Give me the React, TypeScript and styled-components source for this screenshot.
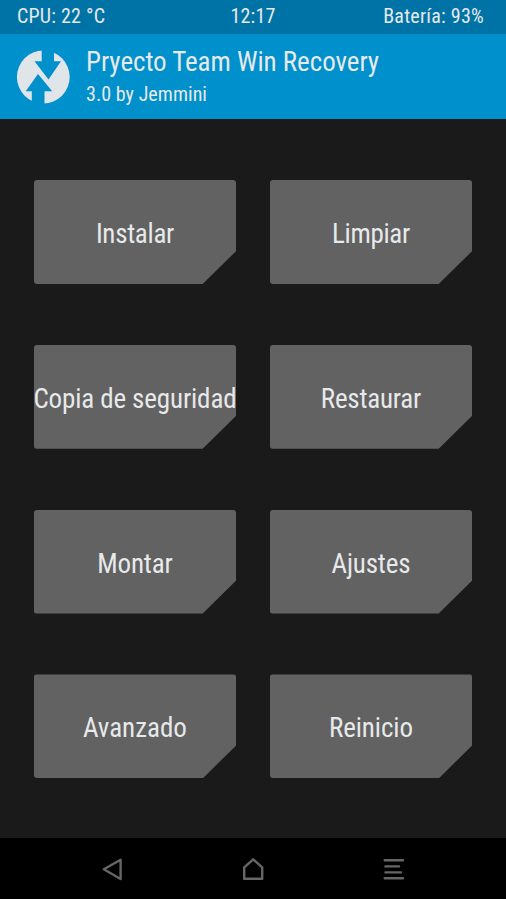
import React from 'react';
import styled, { createGlobalStyle } from 'styled-components';

const GlobalStyle = createGlobalStyle`
  * { box-sizing: border-box; }
  body { margin: 0; background: #1a1a1a; }
`;

const Screen = styled.div`
  width: 506px;
  height: 899px;
  display: flex;
  flex-direction: column;
  overflow: hidden;
  background: #1a1a1a;
  color: #e7e9ea;
  font-family: 'Roboto Condensed', Roboto, 'Liberation Sans', sans-serif;
  font-stretch: 75%;
  font-weight: 400;
`;

const StatusBar = styled.header`
  height: 34px;
  flex: none;
  display: grid;
  grid-template-columns: 1fr auto 1fr;
  align-items: center;
  padding: 0 22px 2px 17px;
  background: #0073a6;
`;

const Label = styled.span<{ $size: number; $spacing?: number }>`
  display: block;
  white-space: nowrap;
  font-size: ${p => p.$size}px;
  line-height: 32px;
  letter-spacing: ${p => p.$spacing ?? 0}px;
`;

const Clock = styled(Label)`
  padding-left: 5px;
`;

const BatteryCell = styled.div`
  justify-self: end;
`;

const TitleBar = styled.div`
  height: 85px;
  flex: none;
  display: flex;
  padding: 12px 16px 0;
  gap: 16px;
  background: #0090cb;
`;

const Logo = styled.svg`
  width: 54px;
  height: 54px;
  margin-top: 4px;
  flex: none;
`;

const Titles = styled.div`
  display: flex;
  flex-direction: column;
  align-items: flex-start;
`;

const Menu = styled.main`
  flex: 1;
  display: grid;
  grid-template-columns: 202.5px 202.5px;
  grid-auto-rows: 104px;
  gap: 60.8px 33.5px;
  padding: 61px 0 0 33.7px;
`;

const MenuButton = styled.button`
  display: flex;
  align-items: center;
  justify-content: center;
  border: 0;
  border-radius: 3px;
  padding: 4px 0 0;
  background: #626262;
  color: inherit;
  font: inherit;
  clip-path: polygon(0 0, 100% 0, 100% 71px, 169px 100%, 0 100%);
`;

const NavBar = styled.nav`
  height: 61px;
  flex: none;
  display: flex;
  justify-content: center;
  gap: 110px;
  padding-top: 15px;
  background: #000;
`;

const NavIcon = styled.svg`
  width: 30px;
  height: 30px;
  fill: none;
  stroke: #666;
  stroke-width: 2.4;
  stroke-linejoin: round;
  stroke-linecap: round;
`;

const items = [
  { text: 'Instalar', spacing: -0.3 },
  { text: 'Limpiar', spacing: -0.3 },
  { text: 'Copia de seguridad', spacing: -0.12 },
  { text: 'Restaurar', spacing: -0.2 },
  { text: 'Montar', spacing: -0.15 },
  { text: 'Ajustes', spacing: -0.15 },
  { text: 'Avanzado', spacing: 0 },
  { text: 'Reinicio', spacing: -0.1 },
];

export default function App() {
  return (
    <Screen>
      <GlobalStyle />
      <StatusBar>
        <Label $size={20} $spacing={0.22}>CPU: 22 °C</Label>
        <Clock $size={20} $spacing={0.2}>12:17</Clock>
        <BatteryCell><Label $size={20} $spacing={0.25}>Batería: 93%</Label></BatteryCell>
      </StatusBar>
      <TitleBar>
        <Logo viewBox="0 0 54 54">
          <circle cx="27.3" cy="27" r="26.4" fill="#dfe5e9" />
          <path fill="#0090cb" d="M25.7 0 H38 V11.3 H45 L32.5 29.6 L18.5 11.3 H25.7 Z" />
          <path fill="#0090cb" d="M28.5 54 V41.3 H36.2 L22 24.1 L9.7 41.3 H15.8 V54 Z" />
        </Logo>
        <Titles>
          <Label $size={27} $spacing={-0.04}>Pryecto Team Win Recovery</Label>
          <Label $size={20} $spacing={0.05}>3.0 by Jemmini</Label>
        </Titles>
      </TitleBar>
      <Menu>
        {items.map(({ text, spacing }) => (
          <MenuButton key={text}>
            <Label $size={27} $spacing={spacing}>{text}</Label>
          </MenuButton>
        ))}
      </Menu>
      <NavBar>
        <NavIcon viewBox="0 0 30 30"><path d="M5.8 16.2 L22.6 6.8 V26 Z" /></NavIcon>
        <NavIcon viewBox="0 0 30 30"><path d="M6.2 14.3 L15.2 6.3 L24.2 14.3 V25.8 H6.200 Z" /></NavIcon>
        <NavIcon viewBox="0 0 30 30"><path d="M6.7 7.3 H25 M7.5 13.4 H21 M7.5 19.4 H23 M6.7 25.2 H25" /></NavIcon>
      </NavBar>
    </Screen>
  );
}
